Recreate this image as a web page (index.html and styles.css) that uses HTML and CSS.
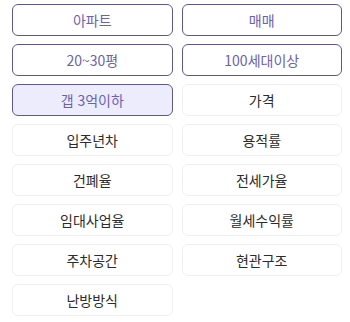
FILE: index.html
```html
<!DOCTYPE html>
<html lang="ko">
<head>
    <meta charset="UTF-8">
    <meta name="viewport" content="width=device-width, initial-scale=1.0">
    <title>필터</title>
    <link rel="stylesheet" href="styles.css">
</head>
<body>
    <div class="filtros">
        <button class="chip activo">아파트</button>
        <button class="chip activo">매매</button>
        <button class="chip activo">20~30평</button>
        <button class="chip activo">100세대이상</button>
        <button class="chip activo lleno">갭 3억이하</button>
        <button class="chip">가격</button>
        <button class="chip">입주년차</button>
        <button class="chip">용적률</button>
        <button class="chip">건폐율</button>
        <button class="chip">전세가율</button>
        <button class="chip">임대사업율</button>
        <button class="chip">월세수익률</button>
        <button class="chip">주차공간</button>
        <button class="chip">현관구조</button>
        <button class="chip">난방방식</button>
    </div>
</body>
</html>
```

FILE: styles.css
```css
* {
    margin: 0;
    padding: 0;
    box-sizing: border-box;
}

body {
    background-color: #fff;
    font-family: 'Noto Sans CJK KR', 'Noto Sans', sans-serif;
}

.filtros {
    display: grid;
    grid-template-columns: 1fr 1fr;
    grid-auto-rows: 32px;
    gap: 8px 9px;
    padding: 4px 8px 0 12px;
}

.chip {
    background-color: #fff;
    border: 1px solid #efeff1;
    border-radius: 6px;
    color: #2c2c2c;
    font-family: inherit;
    font-size: 14px;
    cursor: pointer;
}

.chip.activo {
    border-color: #5d5891;
    color: #6b62ad;
}

.chip.lleno {
    background-color: #ececfc;
}
```
